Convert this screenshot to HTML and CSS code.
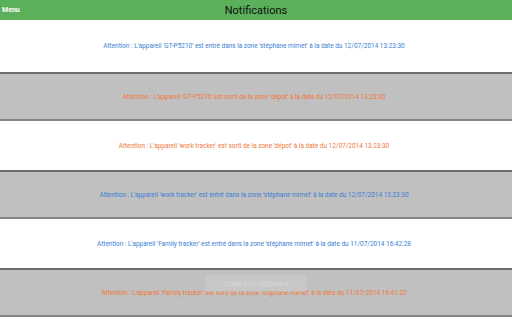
FILE: index.html
```html
<!DOCTYPE html>
<html lang="fr">
  <head>
    <meta charset="UTF-8" />
    <meta name="viewport" content="width=device-width, initial-scale=1.0" />
    <title>Notifications</title>
    <link rel="stylesheet" href="styles.css">
  </head>
  <body>
    <div class="top-bar">
      <span class="menu">Menu</span>
      <h1>Notifications</h1>
    </div>

    <div class="list">
      <div class="row first"><p class="in">Attention : L'appareil 'GT-P5210' est entré dans la zone 'stéphane mimet' à la date du 12/07/2014 13:23:30</p></div>
      <div class="row grey"><p class="out">Attention : L'appareil 'GT-P5210' est sorti de la zone 'dépot' à la date du 12/07/2014 13:23:30</p></div>
      <div class="row"><p class="out">Attention : L'appareil 'work tracker' est sorti de la zone 'dépot' à la date du 12/07/2014 13:23:30</p></div>
      <div class="row grey"><p class="in">Attention : L'appareil 'work tracker' est entré dans la zone 'stéphane mimet' à la date du 12/07/2014 13:23:30</p></div>
      <div class="row"><p class="in">Attention : L'appareil 'Family tracker' est entré dans la zone 'stéphane mimet' à la date du 11/07/2014 16:42:28</p></div>
      <div class="row grey"><p class="out">Attention : L'appareil 'Family tracker' est sorti de la zone 'stéphane mimet' à la date du 11/07/2014 16:41:22</p></div>
    </div>

    <div class="toast">Copied to clipboard</div>
  </body>
</html>
```

FILE: styles.css
```css
body {
  margin: 0;
  font-family: Roboto, "Liberation Sans", sans-serif;
  background: #fff;
  width: 512px;
  height: 320px;
  overflow: hidden;
  position: relative;
}
.top-bar {
  height: 20px;
  background: #5bb05b;
  display: flex;
  align-items: center;
  position: relative;
}
.menu {
  color: #fff;
  font-size: 7px;
  font-weight: bold;
  padding-left: 2px;
}
.top-bar h1 {
  position: absolute;
  left: 0;
  right: 0;
  margin: 0;
  text-align: center;
  font-size: 11px;
  font-weight: normal;
  color: #111;
}
.row {
  height: 49px;
  box-sizing: border-box;
  display: flex;
  align-items: center;
  justify-content: center;
}
.row.first {
  height: 52px;
}
.row.grey {
  background: #c0c0c0;
  border-top: 2px solid #6c6c6c;
  border-bottom: 2px solid #858585;
}
.row p {
  margin: 0 0 0 -4px;
  font-size: 6.45px;
}
.in {
  color: #3b7fd4;
}
.out {
  color: #f07838;
}
.toast {
  position: absolute;
  left: 205px;
  top: 275px;
  width: 102px;
  height: 17px;
  line-height: 17px;
  text-align: center;
  font-size: 7.5px;
  color: #d8d8d8;
  background: rgba(210, 210, 210, 0.4);
  border-radius: 2px;
}
```
